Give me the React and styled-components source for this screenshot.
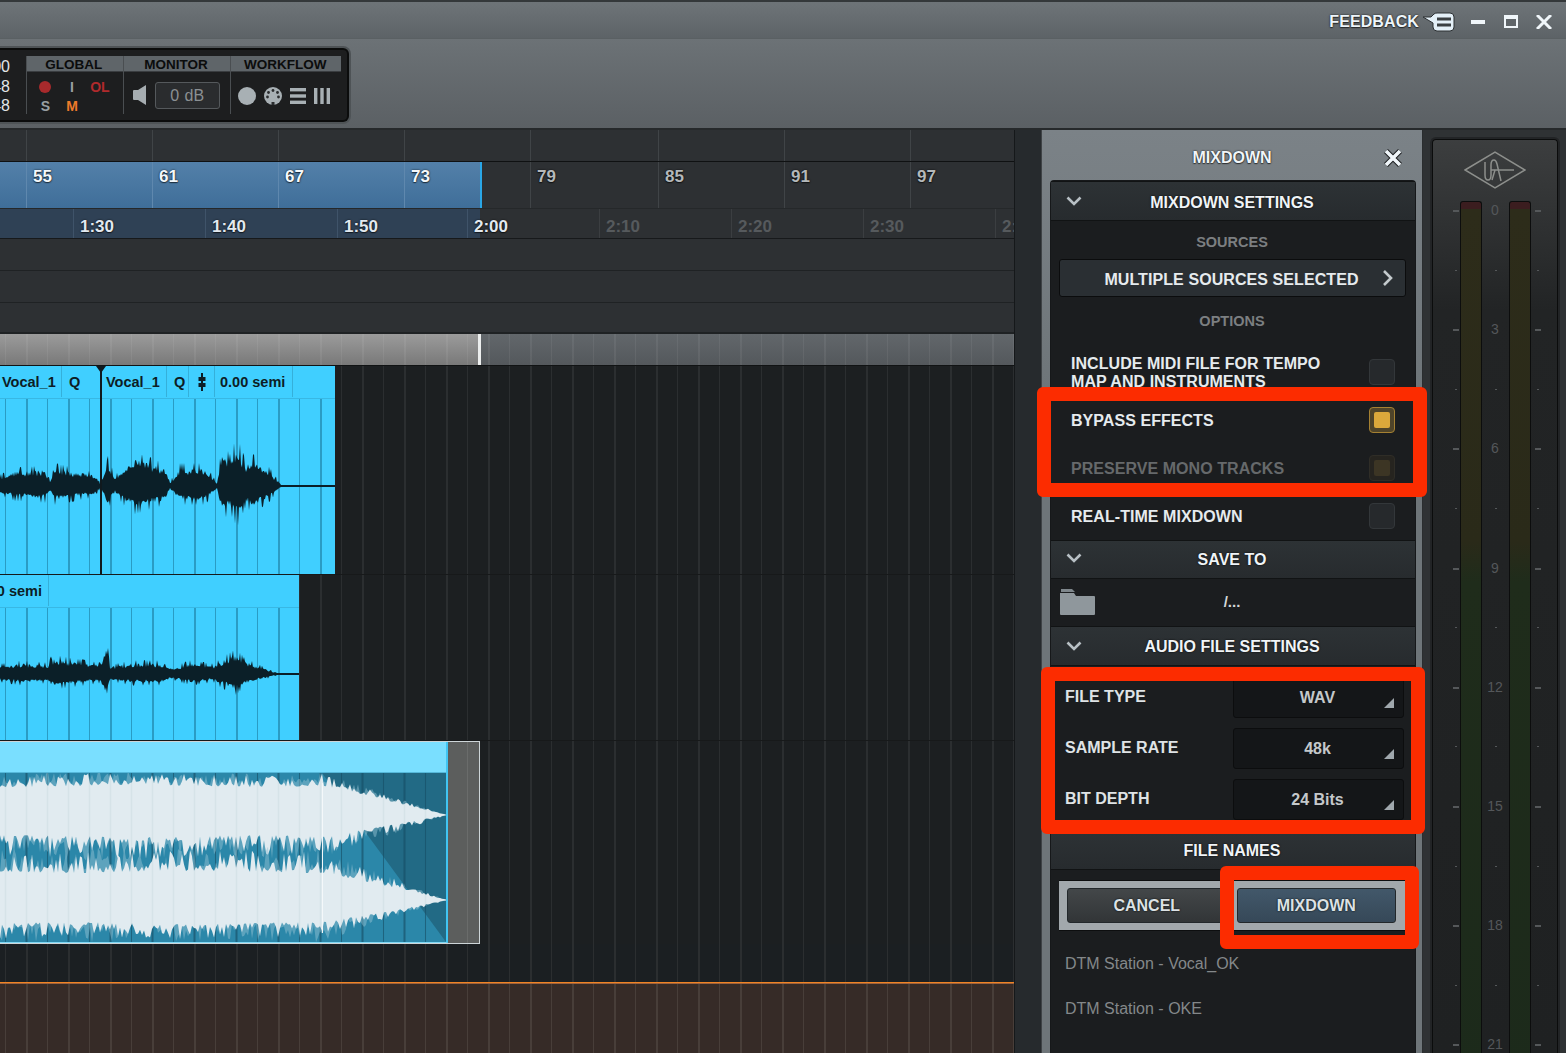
import React from 'react';
import styled, { createGlobalStyle } from 'styled-components';

const GlobalStyle = createGlobalStyle`
  html, body { margin: 0; padding: 0; background: #1b1d1f; }
  body { font-family: "Liberation Sans", Arial, sans-serif; }
  #root { width: 1566px; height: 1053px; overflow: hidden; }
  * { box-sizing: border-box; }
`;

const FONT_SHADOW = '0 0 2px rgba(0,0,0,.85), 0 1px 1px rgba(0,0,0,.5)';
const gridLines = (color) => `repeating-linear-gradient(90deg, transparent 0 5px, ${color} 5px 6px, transparent 6px 26px, ${color} 26px 28px, transparent 28px 42px)`;

const Page = styled.div`
  width: 1566px;
  height: 1053px;
  overflow: hidden;
  display: flex;
  flex-direction: column;
  background: #1b1d1f;
`;

/* ---------- window chrome ---------- */
const TitleBar = styled.div`
  height: 39px;
  flex: none;
  display: flex;
  align-items: center;
  justify-content: flex-end;
  border-top: 2px solid #34383a;
  border-bottom: 1px solid #5a6063;
  background: linear-gradient(#6e7478, #5d6367);
  padding: 3px 14px 0 0;
`;
const FeedbackLabel = styled.span`
  color: #eef5fa;
  font-size: 16px;
  font-weight: 700;
  letter-spacing: 0.1px;
  text-shadow: ${FONT_SHADOW};
  margin-right: 3px;
`;
const WindowButton = styled.button`
  border: 0;
  padding: 0;
  background: none;
  display: flex;
  margin-left: ${(p) => p.$gap}px;
`;

const Toolbar = styled.div`
  height: 91px;
  flex: none;
  padding-top: 9px;
  border-bottom: 2px solid #26292b;
  background: linear-gradient(#6c7276, #5b6064);
`;
const ToolPanel = styled.div`
  width: 349px;
  height: 74px;
  display: flex;
  padding: 6px 6px 6px 0;
  background: #1d1e1f;
  border: 2px solid #0b0c0c;
  border-left: 0;
  border-radius: 0 6px 6px 0;
  box-shadow: 0 0 0 2px #4e5356;
`;
const Readout = styled.div`
  width: 10px;
  margin-right: 16px;
  overflow: hidden;
  display: flex;
  flex-direction: column;
  align-items: flex-end;
  color: #e4e6e7;
  font-size: 16px;
  line-height: 19.5px;
  padding-top: 1px;
`;
const ToolSection = styled.div`
  width: ${(p) => p.$w}px;
  display: flex;
  flex-direction: column;
  border-left: 1px solid #4a4e51;
`;
const ToolTab = styled.div`
  height: 16px;
  background: #5f6569;
  border-bottom: 1px solid #3a3d40;
  color: #0b0c0c;
  font-size: 13.5px;
  font-weight: 700;
  line-height: 18px;
  padding-right: 2px;
  text-align: center;
`;
const GlobalGrid = styled.div`
  flex: 1;
  display: grid;
  grid-template-columns: 37px 16px 40px;
  grid-template-rows: 19px 19px;
  padding: 5px 0 0 0;
  justify-items: center;
  align-items: center;
  font-size: 14px;
  font-weight: 700;
`;
const Flag = styled.span`
  color: ${(p) => p.$color};
`;
const RecordDot = styled.span`
  width: 12px;
  height: 12px;
  border-radius: 50%;
  background: #a82a2c;
`;
const ToolBody = styled.div`
  flex: 1;
  display: flex;
  align-items: center;
  gap: ${(p) => p.$gap}px;
  padding: ${(p) => p.$top}px 0 0 ${(p) => p.$pad}px;
`;
const DbBox = styled.div`
  width: 65px;
  height: 27px;
  border: 1px solid #55595c;
  border-radius: 3px;
  background: #2a2c2e;
  color: #8b9093;
  font-size: 16px;
  line-height: 25px;
  word-spacing: 1px;
  text-align: center;
`;

/* ---------- main area ---------- */
const MainRow = styled.div`
  flex: 1;
  display: flex;
  min-height: 0;
`;
const Timeline = styled.div`
  width: 1014px;
  flex: none;
  display: flex;
  flex-direction: column;
  overflow: hidden;
`;
const RulerTop = styled.div`
  height: 32px;
  flex: none;
  display: flex;
  padding-left: 26px;
  background: #2d3033;
  border-bottom: 1px solid #0f1112;
`;
const RulerBars = styled.div`
  height: 46px;
  flex: none;
  display: flex;
  padding-left: 26px;
  background: linear-gradient(#5380a9, #3f6e99) 0 0 / 480px 100% no-repeat, #2d3033;
  position: relative;
`;
const SelectionEdge = styled.div`
  position: absolute;
  left: 480px;
  top: 0;
  bottom: 0;
  width: 2px;
  background: #2aa6e6;
`;
const BarCell = styled.div`
  width: ${(p) => p.$w}px;
  flex: none;
  border-left: 1px solid ${(p) => (p.$on ? '#5f88ae' : '#404447')};
  padding: 5px 0 0 6px;
  color: ${(p) => (p.$on ? '#f4f8fb' : '#b4b8ba')};
  font-size: 17px;
  font-weight: 700;
  line-height: 20px;
  text-shadow: ${FONT_SHADOW};
`;
const RulerTime = styled.div`
  height: 31px;
  flex: none;
  display: flex;
  padding-left: 73px;
  background: linear-gradient(#2f4155, #2f4155) 0 0 / 480px 100% no-repeat, #2d3033;
  border-top: 1px solid #25282a;
  border-bottom: 1px solid #17191b;
  overflow: hidden;
`;
const TimeCell = styled.div`
  width: ${(p) => p.$w}px;
  flex: none;
  border-left: 1px solid ${(p) => (p.$dim ? '#3b3e41' : '#3f5369')};
  padding: 8px 0 0 6px;
  color: ${(p) => (p.$dim ? '#565a5d' : '#e2e9ef')};
  font-size: 17px;
  font-weight: 700;
  line-height: 20px;
  white-space: nowrap;
  text-shadow: ${(p) => (p.$dim ? 'none' : FONT_SHADOW)};
`;
const EmptyLane = styled.div`
  height: ${(p) => p.$h}px;
  flex: none;
  background: #2d3033;
  border-bottom: 1px solid #1f2224;
`;
const Overview = styled.div`
  height: 33px;
  flex: none;
  position: relative;
  border-top: 1px solid #1f2224;
  border-bottom: 1px solid #111314;
  background:
    ${gridLines('rgba(255,255,255,.06)')},
    linear-gradient(#9b9b9b, #797979) 0 0 / 480px 100% no-repeat,
    linear-gradient(#62676b, #54585c);
`;
const OverviewHandle = styled.div`
  position: absolute;
  left: 478px;
  top: 0;
  bottom: 0;
  width: 3px;
  background: #eceeee;
`;
const Track = styled.div`
  height: ${(p) => p.$h}px;
  flex: none;
  border-bottom: ${(p) => (p.$open ? '0' : '1px solid #17191a')};
  background: ${gridLines('#2b2e30')}, #1c1f21;
`;
const FillerTrack = styled.div`
  height: 38px;
  flex: none;
  background: ${gridLines('#2b2e30')}, #1b1f22;
`;
const BrownTrack = styled.div`
  flex: 1;
  border-top: 1px solid #f08424;
  box-shadow: inset 0 1px 0 #a0623a;
  background: ${gridLines('#483e39')}, #362b27;
`;
const Clip = styled.div`
  width: ${(p) => p.$w}px;
  height: 100%;
  position: relative;
  display: flex;
  flex-direction: column;
  background: ${gridLines('#2a9cc4')}, #40cfff;
`;
const ClipHeader = styled.div`
  height: 33px;
  flex: none;
  display: flex;
  align-items: stretch;
  background: #40cfff;
  border-bottom: 1px solid #38b8e4;
  color: #0d1d25;
  font-size: 14.5px;
  font-weight: 700;
  padding-bottom: 1px;
`;
const ClipCell = styled.div`
  width: ${(p) => p.$w}px;
  flex: none;
  display: flex;
  align-items: center;
  justify-content: ${(p) => (p.$end ? 'flex-end' : p.$left ? 'flex-start' : 'center')};
  padding-left: ${(p) => p.$pl || 0}px;
  padding-right: ${(p) => (p.$end ? 6 : 0)}px;
  white-space: nowrap;
  overflow: hidden;
  border-right: ${(p) => (p.$plain ? '0' : '1px solid #35b0da')};
`;
const PlayLine = styled.div`
  position: absolute;
  left: 100px;
  top: 0;
  bottom: 0;
  width: 2px;
  background: #10191e;
  &::before {
    content: '';
    position: absolute;
    left: -4px;
    top: 0;
    border-left: 5px solid transparent;
    border-right: 5px solid transparent;
    border-top: 7px solid #10191e;
  }
`;
const WaveSvg = styled.svg`
  display: block;
  flex: 1;
`;
const StereoClip = styled.div`
  width: 480px;
  height: 203px;
  display: flex;
  border: 1px solid #cdd5d8;
  border-left: 0;
`;
const StereoBody = styled.div`
  width: 448px;
  flex: none;
  display: flex;
  flex-direction: column;
  border-right: 2px solid #41c5f2;
  border-bottom: 1px solid #7fd6f2;
`;
const StereoHeader = styled.div`
  height: 31px;
  flex: none;
  background: #7adfff;
  border-bottom: 1px solid #55b8da;
`;
const ClipTail = styled.div`
  flex: 1;
  background: linear-gradient(90deg, transparent 19px, #6a6c6b 19px 20px, transparent 20px), #5c5e5d;
`;
const Gutter = styled.div`
  width: 27px;
  flex: none;
  background: #262a2d;
  border-left: 1px solid #15181a;
`;

/* ---------- mixdown panel ---------- */
const Panel = styled.div`
  width: 382px;
  flex: none;
  position: relative;
  display: flex;
  flex-direction: column;
  background: linear-gradient(#7b8287, #6e7579 260px);
  border-left: 1px solid #3f4346;
  border-right: 1px solid #2a2d2f;
`;
const PanelTitle = styled.div`
  height: 51px;
  flex: none;
  display: grid;
  grid-template-columns: 50px 1fr 50px;
  align-items: center;
  padding: 4px 0 0 0;
  color: #f0f5f8;
  font-size: 16px;
  font-weight: 700;
  text-align: center;
  text-shadow: ${FONT_SHADOW};
  svg { margin-left: 11px; }
`;
const PanelBody = styled.div`
  flex: 1;
  margin: 0 7px 0 9px;
  background: #1b1d1f;
  display: flex;
  flex-direction: column;
  border-radius: 3px 3px 0 0;
  box-shadow: 0 0 0 1px #16181a;
`;
const SectionHeader = styled.div`
  height: ${(p) => p.$h || 40}px;
  flex: none;
  display: grid;
  grid-template-columns: 46px 1fr 48px;
  align-items: center;
  padding-top: ${(p) => p.$top || 0}px;
  background: linear-gradient(#2d3235, #272b2e);
  border-top: 1px solid #111314;
  border-bottom: 1px solid #111314;
  color: #f0f4f7;
  font-size: 16px;
  font-weight: 700;
  text-align: center;
  text-shadow: 0 0 2px #000;
  svg { margin-left: 15px; margin-top: -3px; }
`;
const SubLabel = styled.div`
  height: ${(p) => p.$h}px;
  flex: none;
  padding: ${(p) => p.$top}px 2px 0 0;
  color: #7c7f81;
  font-size: 14.5px;
  font-weight: 700;
  line-height: 18px;
  text-align: center;
`;
const SourceButton = styled.div`
  height: 38px;
  flex: none;
  margin: 0 9px 0 8px;
  display: grid;
  grid-template-columns: 36px 1fr 38px;
  align-items: center;
  padding-top: 3px;
  border: 1px solid #0b0c0d;
  border-radius: 3px;
  background: #2a2f33;
  color: #e6ebee;
  font-size: 16px;
  font-weight: 700;
  letter-spacing: 0.08px;
  text-align: center;
  svg { margin-left: 15px; margin-top: -4px; }
`;
const OptionRow = styled.div`
  height: ${(p) => p.$h || 48}px;
  flex: none;
  display: flex;
  align-items: center;
  justify-content: space-between;
  padding: 0 20px 0 20px;
  color: ${(p) => (p.$dim ? '#66696b' : '#e6ebee')};
  font-size: 16px;
  font-weight: 700;
  line-height: 18px;
  letter-spacing: 0.05px;
`;
const OptionText = styled.span`
  width: 280px;
`;
const CheckBox = styled.span`
  width: 26px;
  height: 26px;
  flex: none;
  margin-top: -2px;
  display: flex;
  align-items: center;
  justify-content: center;
  border-radius: 4px;
  border: 1px solid ${(p) => (p.$on ? '#a58132' : '#33373a')};
  background: ${(p) => (p.$on ? '#4f4429' : p.$faded ? '#26241f' : '#26292c')};
  ${(p) => p.$faded && 'border-color: #2f2d27;'}
`;
const CheckFill = styled.span`
  width: 16px;
  height: 16px;
  border-radius: 2px;
  background: ${(p) => (p.$faded ? '#3c3524' : '#dba83b')};
`;
const FolderRow = styled.div`
  height: 47px;
  flex: none;
  display: grid;
  grid-template-columns: 46px 1fr 48px;
  align-items: center;
  color: #d4d8da;
  font-size: 15px;
  font-weight: 700;
  text-align: center;
  svg { margin-left: 9px; margin-top: -1px; }
  span { margin-top: -3px; }
`;
const SettingsGrid = styled.div`
  flex: none;
  display: flex;
  flex-direction: column;
  gap: 10px;
  padding: 11px 11px 11px 14px;
`;
const SettingRow = styled.div`
  height: 41px;
  display: flex;
  align-items: center;
  justify-content: space-between;
  color: #dfe3e5;
  font-size: 16px;
  font-weight: 700;
`;
const SettingName = styled.span`
  margin-top: -2px;
`;
const SelectBox = styled.div`
  width: 171px;
  height: 41px;
  position: relative;
  display: flex;
  align-items: center;
  justify-content: center;
  padding-right: 2px;
  border: 1px solid #0c0d0e;
  border-radius: 3px;
  background: #141618;
  color: #c4c8ca;
  font-size: 16px;
  font-weight: 700;
  &::after {
    content: '';
    position: absolute;
    right: 9px;
    bottom: 9px;
    border-left: 10px solid transparent;
    border-bottom: 10px solid #a0a8ad;
  }
`;
const ButtonGroup = styled.div`
  height: 51px;
  flex: none;
  margin: 10px 10px 0 8px;
  display: flex;
  gap: 10px;
  padding: 7px 9px 8px 8px;
  background: #a2a8ac;
  border-top: 1px solid #0d0e0f;
  border-bottom: 1px solid #0d0e0f;
`;
const ActionButton = styled.button`
  flex: 1;
  height: 35px;
  padding: 1px 0 0 0;
  border: 1px solid #23282b;
  border-radius: 3px;
  background: ${(p) => (p.$primary ? 'linear-gradient(#42586a, #364858)' : 'linear-gradient(#434749, #323537)')};
  color: #dce2e5;
  font-family: inherit;
  font-size: 16px;
  font-weight: 700;
  text-shadow: 0 0 2px #000;
`;
const FileList = styled.div`
  padding: 10px 0 0 14px;
`;
const FileItem = styled.div`
  height: 45px;
  color: #84888a;
  font-size: 16px;
  line-height: 45px;
`;
const RedFrame = styled.div`
  position: absolute;
  left: ${(p) => p.$x}px;
  top: ${(p) => p.$y}px;
  width: ${(p) => p.$w}px;
  height: ${(p) => p.$h}px;
  border: 14px solid #fc2c00;
  border-radius: 6px;
  z-index: 5;
`;

/* ---------- output meter ---------- */
const MeterColumn = styled.div`
  flex: 1;
  display: flex;
  background: #2f3234;
  padding: 9px 8px 0 9px;
`;
const MeterBox = styled.div`
  flex: 1;
  display: flex;
  flex-direction: column;
  border: 1px solid #0b0c0c;
  border-bottom: 0;
  border-radius: 4px 4px 0 0;
  box-shadow: 0 0 0 2px #222426;
  background: linear-gradient(#3c3e3f, #222425 170px, #1f2122);
`;
const LogoRow = styled.div`
  height: 61px;
  flex: none;
  display: flex;
  justify-content: center;
  padding-top: 11px;
`;
const MeterBody = styled.div`
  flex: 1;
  display: flex;
  padding-left: 20px;
`;
const TickColumn = styled.div`
  width: ${(p) => p.$w}px;
  flex: none;
  padding-top: 9px;
  display: flex;
  flex-direction: column;
  align-items: center;
`;
const Mark = styled.div`
  height: 59.6px;
  flex: none;
`;
const TickMark = styled.div`
  width: ${(p) => (p.$major ? 6 : 2)}px;
  height: ${(p) => (p.$major ? 2 : 1)}px;
  background: #55585a;
`;
const ScaleLabel = styled.div`
  height: 14px;
  margin-top: -7px;
  margin-left: -1px;
  color: #54575a;
  font-size: 14px;
  line-height: 14px;
  text-align: center;
`;
const MeterBar = styled.div`
  width: 22px;
  flex: none;
  border: 1px solid #0c0d0d;
  border-bottom: 0;
  border-radius: 3px 3px 0 0;
  background: linear-gradient(#3b1d1f 0 7px, #2d2c1a 7px, #2a2a19 340px, #1f2c1b 380px, #1c2a1b);
`;

/* ---------- drawings ---------- */
const Chevron = () => (
  <svg width="16" height="10" viewBox="0 0 16 10"><path d="M1.5 1.5 8 8l6.5-6.5" fill="none" stroke="#b8c0c5" strokeWidth="2.6" /></svg>
);
const ChevronRight = () => (
  <svg width="11" height="18" viewBox="0 0 11 18"><path d="M2 2l7 7-7 7" fill="none" stroke="#c4cacd" strokeWidth="2.6" /></svg>
);
const CloseIcon = () => (
  <svg width="20" height="20" viewBox="0 0 20 20"><path d="M3 3l14 14M17 3 3 17" stroke="#1a1c1e" strokeWidth="5.5" /><path d="M3 3l14 14M17 3 3 17" stroke="#f0f6fa" strokeWidth="3.6" /></svg>
);
const FeedbackIcon = () => (
  <svg width="33" height="20" viewBox="0 0 33 20">
    <path d="M1 5h8l3-3q1-1 3-1h13q4 0 4 4v10q0 4-4 4H15q-4 0-4-4v-4z" fill="#e4f0f8" stroke="#2c3033" />
    <rect x="15" y="5.5" width="14" height="3" fill="#3a3f42" />
    <rect x="15" y="11.5" width="14" height="3" fill="#3a3f42" />
  </svg>
);
const SpeakerIcon = () => (
  <svg width="14" height="20" viewBox="0 0 14 20"><path d="M1 5h4l8-5v20l-8-5H1a1 1 0 0 1-1-1V6a1 1 0 0 1 1-1z" fill="#a6adb1" /></svg>
);
const MidiIcon = () => (
  <svg width="18" height="18" viewBox="0 0 18 18">
    <circle cx="9" cy="9" r="9" fill="#a8b0b4" />
    <g fill="#2a2c2e"><circle cx="9" cy="3.5" r="1.4" /><circle cx="4.5" cy="5.5" r="1.4" /><circle cx="13.5" cy="5.5" r="1.4" /><circle cx="3.5" cy="10" r="1.4" /><circle cx="14.5" cy="10" r="1.4" /></g>
    <rect x="7.5" y="15" width="3" height="3" fill="#2a2c2e" />
  </svg>
);
const ListIcon = () => (
  <svg width="16" height="16" viewBox="0 0 16 16"><g fill="#a8b0b4"><rect width="16" height="3.4" /><rect y="6.3" width="16" height="3.4" /><rect y="12.6" width="16" height="3.4" /></g></svg>
);
const ColumnsIcon = () => (
  <svg width="16" height="16" viewBox="0 0 16 16"><g fill="#a8b0b4"><rect width="3.4" height="16" /><rect x="6.3" width="3.4" height="16" /><rect x="12.6" width="3.4" height="16" /></g></svg>
);
const CircleIcon = () => (
  <svg width="18" height="18" viewBox="0 0 18 18"><circle cx="9" cy="9" r="9" fill="#a8b0b4" /></svg>
);
const FolderIcon = () => (
  <svg width="35" height="26" viewBox="0 0 35 26">
    <path d="M1 0h11l3 3H1z" fill="#7f878c" />
    <path d="M0 4h14l2 3h18a1 1 0 0 1 1 1v17a1 1 0 0 1-1 1H1a1 1 0 0 1-1-1z" fill="#8f979c" />
  </svg>
);
const UaLogo = () => (
  <svg width="62" height="38" viewBox="0 0 62 38" fill="none" stroke="#8d8f8c" strokeWidth="1.5">
    <path d="M1 19 31 1l30 18-30 18z" />
    <path d="M21 11v13q0 5 3 5t3-5V14q0-5 3-5 2 0 3 4l4 17" />
    <path d="M31 19l-3 10" />
    <path d="M27 19h23" />
  </svg>
);
const TuneIcon = () => (
  <svg width="8" height="18" viewBox="0 0 8 18"><g fill="#0d1d25"><rect x="3" y="0" width="2" height="18" /><rect x="0.5" y="4" width="7" height="4" /><rect x="0.5" y="10" width="7" height="4" /></g></svg>
);

// seeded noise, so the picture stays the same on every load
const makeRandom = (seed) => {
  let s = seed;
  return () => {
    s = (s * 16807) % 2147483647;
    return (s - 1) / 2147483646;
  };
};

const sampleEnvelope = (points, x) => {
  for (let i = 1; i < points.length; i++) {
    if (x <= points[i][0]) {
      const [x0, y0] = points[i - 1];
      const [x1, y1] = points[i];
      return y0 + ((y1 - y0) * (x - x0)) / (x1 - x0 || 1);
    }
  }
  return points[points.length - 1][1];
};

const monoPath = (points, width, center, seed) => {
  const rnd = makeRandom(seed);
  const top = [];
  const bottom = [];
  for (let x = 0; x <= width; x += 1) {
    const h = sampleEnvelope(points, x);
    const spike = rnd() > 0.82 ? 1.15 : 0.55 + rnd() * 0.35;
    const up = h > 2 ? h * spike : h;
    const down = h > 2 ? h * (rnd() > 0.85 ? 0.95 : 0.45 + rnd() * 0.25) : h;
    top.push(`${x},${(center - up).toFixed(1)}`);
    bottom.unshift(`${x},${(center + down).toFixed(1)}`);
  }
  return `M${top.join(' L')} L${bottom.join(' L')} Z`;
};

// one channel of the stereo clip: a solid body with teeth of its own height above and below
const stereoPath = (width, center, up, down, teethUp, teethDown, seed) => {
  const rnd = makeRandom(seed);
  const top = [];
  const bottom = [];
  for (let x = 0; x <= width; x += 2) {
    const taper = x < 322 ? 1 : Math.max((447 - x) / 125, 0.01);
    const wobble = 1 + Math.sin(x / 37 + seed) * 0.04;
    const a = rnd();
    const b = rnd();
    top.push(`${x},${(center - (up * wobble + a * a * teethUp) * taper).toFixed(1)}`);
    bottom.unshift(`${x},${(center + (down * wobble + b * b * teethDown) * taper).toFixed(1)}`);
  }
  return `M${top.join(' L')} L${bottom.join(' L')} Z`;
};

const vocalOne = [[0, 10], [15, 16], [45, 18], [50, 5], [55, 20], [95, 12], [100, 3], [108, 26], [115, 9], [125, 22], [135, 30], [165, 20], [170, 4], [180, 20], [205, 20], [213, 9], [217, 3], [222, 38], [230, 28], [237, 44], [245, 24], [255, 28], [270, 16], [280, 3], [281, 1], [333, 1]];
const vocalTwo = [[0, 9], [20, 12], [48, 10], [52, 17], [100, 10], [107, 30], [110, 8], [130, 12], [165, 12], [170, 6], [190, 12], [215, 9], [220, 14], [236, 22], [245, 14], [270, 4], [277, 1], [297, 1]];

const VocalWave = ({ points, width, height, center, seed }) => (
  <WaveSvg width={width} height={height} viewBox={`0 0 ${width} ${height}`}>
    <path d={monoPath(points, width, center, seed)} fill="#0b1f28" />
    <line x1="280" x2={width - 2} y1={center} y2={center} stroke="#0b1f28" strokeWidth="1.4" />
  </WaveSvg>
);

const stereoLines = Array.from({ length: 21 }, (_, i) => 5.5 + i * 21);

const StereoWave = () => (
  <WaveSvg width="446" height="169" viewBox="0 0 446 169">
    <rect width="446" height="169" fill="#2b87a9" />
    <path d="M322 0 446 169V0z" fill="#226a85" />
    {stereoLines.map((x, i) => (
      <line key={x} x1={x} x2={x} y1="0" y2="169" stroke="#174f66" strokeOpacity=".6" strokeWidth={i % 2 ? 2 : 1} />
    ))}
    <path d={stereoPath(446, 42, 30, 22, 13, 24, 11)} fill="#8fc0d2" opacity=".5" />
    <path d={stereoPath(446, 42, 29, 21, 12, 22, 23)} fill="#e1ebf0" />
    <path d={stereoPath(446, 127, 29, 24, 24, 18, 37)} fill="#8fc0d2" opacity=".5" />
    <path d={stereoPath(446, 127, 28, 23, 22, 16, 53)} fill="#e1ebf0" />
    {stereoLines.map((x) => (
      <line key={x} x1={x} x2={x} y1="0" y2="169" stroke="#174f66" strokeOpacity=".05" strokeWidth="1.5" />
    ))}
    <line x1="322.5" x2="322.5" y1="10" y2="160" stroke="#f4f8fa" strokeWidth="1" />
  </WaveSvg>
);

const bars = [['55', 126], ['61', 126], ['67', 126], ['73', 126], ['79', 128], ['85', 126], ['91', 126], ['97', 126]];
const times = [['1:30', 132], ['1:40', 132], ['1:50', 130], ['2:00', 132], ['2:10', 132], ['2:20', 132], ['2:30', 132], ['2:40', 132]];
const scale = Array.from({ length: 15 }, (_, i) => (i % 2 === 0 ? String(i * 1.5) : null));

const Ticks = () => (
  <TickColumn $w={6}>
    {scale.map((label, i) => (
      <Mark key={i}><TickMark $major={label !== null} /></Mark>
    ))}
  </TickColumn>
);

export default function App() {
  return (
    <Page>
      <GlobalStyle />
      <TitleBar>
        <FeedbackLabel>FEEDBACK</FeedbackLabel>
        <FeedbackIcon />
        <WindowButton $gap={16}>
          <svg width="14" height="4"><rect width="14" height="4" fill="#f0f6fa" /></svg>
        </WindowButton>
        <WindowButton $gap={19}>
          <svg width="14" height="13"><path d="M0 0h14v13H0z" fill="#f0f6fa" /><path d="M2 4h10v7H2z" fill="#5f6569" /></svg>
        </WindowButton>
        <WindowButton $gap={18}>
          <svg width="16" height="14" viewBox="0 0 16 14"><path d="M1 0l14 14M15 0 1 14" stroke="#f0f6fa" strokeWidth="3" /></svg>
        </WindowButton>
      </TitleBar>

      <Toolbar>
        <ToolPanel>
          <Readout>
            <span>00</span>
            <span>48</span>
            <span>48</span>
          </Readout>
          <ToolSection $w={97}>
            <ToolTab>GLOBAL</ToolTab>
            <GlobalGrid>
              <RecordDot />
              <Flag $color="#9aa0a3">I</Flag>
              <Flag $color="#b02a2c">OL</Flag>
              <Flag $color="#9aa0a3">S</Flag>
              <Flag $color="#ee7a2a">M</Flag>
            </GlobalGrid>
          </ToolSection>
          <ToolSection $w={108}>
            <ToolTab>MONITOR</ToolTab>
            <ToolBody $gap={8} $pad={9} $top={4}>
              <SpeakerIcon />
              <DbBox>0 dB</DbBox>
            </ToolBody>
          </ToolSection>
          <ToolSection $w={111}>
            <ToolTab>WORKFLOW</ToolTab>
            <ToolBody $gap={8} $pad={7} $top={5}>
              <CircleIcon />
              <MidiIcon />
              <ListIcon />
              <ColumnsIcon />
            </ToolBody>
          </ToolSection>
        </ToolPanel>
      </Toolbar>

      <MainRow>
        <Timeline>
          <RulerTop>
            {bars.map(([b, w]) => <BarCell key={b} $w={w} />)}
          </RulerTop>
          <RulerBars>
            {bars.map(([b, w], i) => <BarCell key={b} $w={w} $on={i < 4}>{b}</BarCell>)}
            <SelectionEdge />
          </RulerBars>
          <RulerTime>
            {times.map(([t, w], i) => <TimeCell key={t} $w={w} $dim={i > 3}>{t}</TimeCell>)}
          </RulerTime>
          <EmptyLane $h={32} />
          <EmptyLane $h={32} />
          <EmptyLane $h={30} />
          <Overview><OverviewHandle /></Overview>

          <Track $h={209}>
            <Clip $w={335}>
              <ClipHeader>
                <ClipCell $w={62} $left $pl={2}>Vocal_1</ClipCell>
                <ClipCell $w={39} $plain $left $pl={7}>Q</ClipCell>
                <ClipCell $w={66} $left $pl={5}>Vocal_1</ClipCell>
                <ClipCell $w={22} $left $pl={7}>Q</ClipCell>
                <ClipCell $w={26}><TuneIcon /></ClipCell>
                <ClipCell $w={78} $left $pl={5}>0.00 semi</ClipCell>
              </ClipHeader>
              <VocalWave points={vocalOne} width={335} height={175} center={87} seed={4711} />
              <PlayLine />
            </Clip>
          </Track>
          <Track $h={166}>
            <Clip $w={299}>
              <ClipHeader>
                <ClipCell $w={49} $end>0.00 semi</ClipCell>
              </ClipHeader>
              <VocalWave points={vocalTwo} width={299} height={132} center={66} seed={9127} />
            </Clip>
          </Track>
          <Track $h={203} $open>
            <StereoClip>
              <StereoBody>
                <StereoHeader />
                <StereoWave />
              </StereoBody>
              <ClipTail />
            </StereoClip>
          </Track>
          <FillerTrack />
          <BrownTrack />
        </Timeline>

        <Gutter />

        <Panel>
          <PanelTitle>
            <span />
            <span>MIXDOWN</span>
            <CloseIcon />
          </PanelTitle>
          <PanelBody>
            <SectionHeader $top={3}>
              <Chevron />
              <span>MIXDOWN SETTINGS</span>
            </SectionHeader>
            <SubLabel $h={38} $top={12}>SOURCES</SubLabel>
            <SourceButton>
              <span />
              <span>MULTIPLE SOURCES SELECTED</span>
              <ChevronRight />
            </SourceButton>
            <SubLabel $h={51} $top={15}>OPTIONS</SubLabel>
            <OptionRow $h={49}>
              <OptionText>INCLUDE MIDI FILE FOR TEMPO MAP AND INSTRUMENTS</OptionText>
              <CheckBox />
            </OptionRow>
            <OptionRow>
              <span>BYPASS EFFECTS</span>
              <CheckBox $on><CheckFill /></CheckBox>
            </OptionRow>
            <OptionRow $dim>
              <span>PRESERVE MONO TRACKS</span>
              <CheckBox $faded><CheckFill $faded /></CheckBox>
            </OptionRow>
            <OptionRow $h={47}>
              <span>REAL-TIME MIXDOWN</span>
              <CheckBox />
            </OptionRow>
            <SectionHeader $h={39}>
              <Chevron />
              <span>SAVE TO</span>
            </SectionHeader>
            <FolderRow>
              <FolderIcon />
              <span>/...</span>
            </FolderRow>
            <SectionHeader $h={40} $top={2}>
              <Chevron />
              <span>AUDIO FILE SETTINGS</span>
            </SectionHeader>
            <SettingsGrid>
              <SettingRow><SettingName>FILE TYPE</SettingName><SelectBox>WAV</SelectBox></SettingRow>
              <SettingRow><SettingName>SAMPLE RATE</SettingName><SelectBox>48k</SelectBox></SettingRow>
              <SettingRow><SettingName>BIT DEPTH</SettingName><SelectBox>24 Bits</SelectBox></SettingRow>
            </SettingsGrid>
            <SectionHeader $h={39}>
              <span />
              <span>FILE NAMES</span>
            </SectionHeader>
            <ButtonGroup>
              <ActionButton>CANCEL</ActionButton>
              <ActionButton $primary>MIXDOWN</ActionButton>
            </ButtonGroup>
            <FileList>
              <FileItem>DTM Station - Vocal_OK</FileItem>
              <FileItem>DTM Station - OKE</FileItem>
            </FileList>
          </PanelBody>
          <RedFrame $x={-5} $y={257} $w={390} $h={110} />
          <RedFrame $x={-1} $y={537} $w={384} $h={167} />
          <RedFrame $x={178} $y={736} $w={199} $h={83} />
        </Panel>

        <MeterColumn>
          <MeterBox>
            <LogoRow><UaLogo /></LogoRow>
            <MeterBody>
              <Ticks />
              <TickColumn $w={1} />
              <MeterBar />
              <TickColumn $w={27}>
                {scale.map((label, i) => (
                  <Mark key={i}>
                    {label !== null ? <ScaleLabel>{label}</ScaleLabel> : <TickMark />}
                  </Mark>
                ))}
              </TickColumn>
              <MeterBar />
              <TickColumn $w={4} />
              <Ticks />
            </MeterBody>
          </MeterBox>
        </MeterColumn>
      </MainRow>
    </Page>
  );
}
